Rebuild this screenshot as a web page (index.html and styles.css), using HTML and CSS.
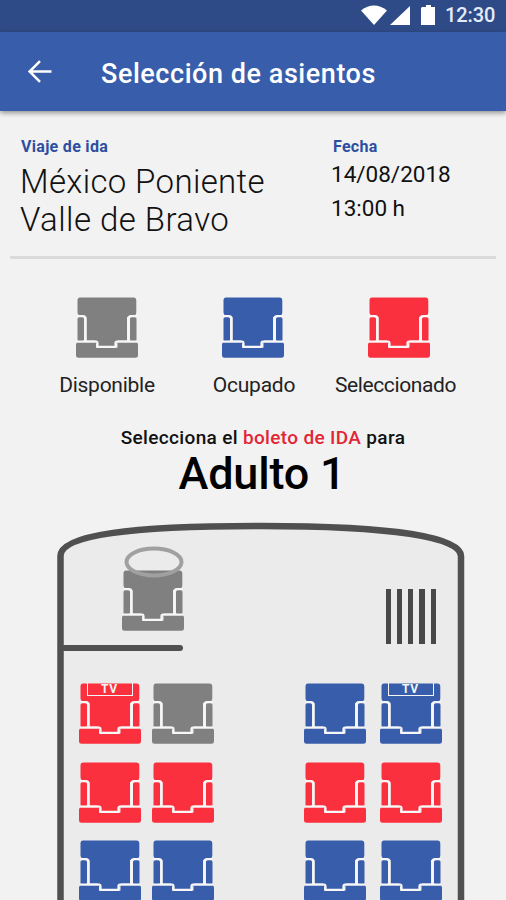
FILE: index.html
```html
<!DOCTYPE html>
<html lang="es">
<head>
<meta charset="utf-8">
<title>Selección de asientos</title>
<link rel="stylesheet" href="styles.css">
</head>
<body>
<svg class="defs" aria-hidden="true">
  <symbol id="seat" viewBox="0 0 62 61">
    <path fill="currentColor" d="M4 .5H57.500Q60.300.500 60.300 3.500V15Q60.300 18.500 57.500 18.500L51 20V43.500H42L39 49H22L19 43.500H10.500V20L4 18.500Q1.500 18 1.500 15V3.500Q1.500.500 4 .500Z"/>
    <rect fill="currentColor" x="1.500" y="20" width="6.500" height="24.500" rx="2"/>
    <rect fill="currentColor" x="54" y="20" width="6.500" height="24.500" rx="2"/>
    <path fill="currentColor" d="M2 45.500H20V50.500H41.500V45.500H60Q62 45.500 62 47.500V58.500Q62 60.800 59.500 60.800H2.500Q0 60.800 0 58.500V47.500Q0 45.500 2 45.500Z"/>
    <path class="seam" d="M1.500 19.200H7Q9.500 19.200 9.500 22V44.500M60.500 19.200H55Q52.500 19.200 52.500 22V44.500M1.500 44.500H20.500Q21.500 44.500 21.500 46V49.800H39.500V46Q39.500 44.500 41 44.500H60.500"/>
  </symbol>
</svg>

<div class="status">
  <svg class="status-icons" viewBox="0 0 76 24">
    <path d="M0 6.500Q13-3.500 26 6.500L13 21Z"/>
    <path d="M49 2V21H29Z"/>
    <path d="M61 3H65V1H70V3H74V21H60V4Z"/>
  </svg>
  <span class="clock">12:30</span>
</div>
<header class="bar">
  <svg class="back" viewBox="0 0 24 24"><path d="M12.500 2L2.500 12L12.500 22M3 12H23.500"/></svg>
  <h1>Selección de asientos</h1>
</header>

<section class="trip">
  <div class="route">
    <div class="label">Viaje de ida</div>
    <div class="place">México Poniente</div>
    <div class="place second">Valle de Bravo</div>
  </div>
  <div class="date">
    <div class="label">Fecha</div>
    <div class="when">14/08/2018</div>
    <div class="when hour">13:00 h</div>
  </div>
</section>

<section class="legend">
  <div class="key free"><svg class="seat"><use href="#seat"/></svg><span>Disponible</span></div>
  <div class="key taken"><svg class="seat"><use href="#seat"/></svg><span class="busy">Ocupado</span></div>
  <div class="key chosen"><svg class="seat"><use href="#seat"/></svg><span class="picked">Seleccionado</span></div>
</section>

<section class="prompt">
  <p>Selecciona el <em>boleto de IDA</em> para</p>
  <h2>Adulto 1</h2>
</section>

<main class="bus">
  <svg class="shell" viewBox="0 0 410 380"><path d="M4.500 385V35C4.500 14 74 5 204.500 5C335 5 405 16 405 35V385"/></svg>
  <div class="cabin">
    <div class="driver free">
      <svg class="seat"><use href="#seat"/></svg>
      <svg class="wheel" viewBox="0 0 60 32"><ellipse cx="30" cy="16" rx="27.500" ry="13.500"/></svg>
    </div>
    <div class="steps"><i></i><i></i><i></i><i></i><i></i></div>
  </div>
  <div class="wall"></div>
  <div class="seats">
    <div class="cell chosen"><svg class="seat"><use href="#seat"/></svg><span class="tv">TV</span></div>
    <div class="cell free"><svg class="seat"><use href="#seat"/></svg></div>
    <div class="cell taken"><svg class="seat"><use href="#seat"/></svg></div>
    <div class="cell taken"><svg class="seat"><use href="#seat"/></svg><span class="tv">TV</span></div>
    <div class="cell chosen"><svg class="seat"><use href="#seat"/></svg></div>
    <div class="cell chosen"><svg class="seat"><use href="#seat"/></svg></div>
    <div class="cell chosen"><svg class="seat"><use href="#seat"/></svg></div>
    <div class="cell chosen"><svg class="seat"><use href="#seat"/></svg></div>
    <div class="cell taken"><svg class="seat"><use href="#seat"/></svg></div>
    <div class="cell taken"><svg class="seat"><use href="#seat"/></svg></div>
    <div class="cell taken"><svg class="seat"><use href="#seat"/></svg></div>
    <div class="cell taken"><svg class="seat"><use href="#seat"/></svg></div>
  </div>
</main>
</body>
</html>
```

FILE: styles.css
```css
* { box-sizing: border-box; margin: 0; padding: 0; }
body {
  width: 506px;
  height: 900px;
  overflow: hidden;
  background: #f2f2f2;
  font-family: Roboto, sans-serif;
  color: #111;
  white-space: nowrap;
}
svg { display: block; }
.defs { position: absolute; width: 0; height: 0; }

.status {
  height: 32px;
  background: #2f4b87;
  display: flex;
  justify-content: flex-end;
  padding: 4px 11px 0 0;
  color: #e4ebfb;
}
.status-icons { width: 76px; height: 24px; fill: #fff; margin-right: 8px; }
.clock { font-size: 20px; line-height: 23px; font-weight: 500; letter-spacing: -.1px; width: 50px; }

.bar {
  height: 79px;
  background: #385dab;
  box-shadow: 0 2px 5px rgba(0, 0, 0, .4);
  display: flex;
  align-items: center;
  padding: 4px 0 0 27px;
  color: #fff;
}
.back { width: 25px; height: 25px; fill: none; stroke: #fff; stroke-width: 2.4; margin-right: 49px; margin-top: -4px; }
.bar h1 { font-size: 27px; font-weight: 500; letter-spacing: .55px; }

.trip {
  height: 148px;
  margin: 0 10px;
  padding: 26px 0 0 11px;
  border-bottom: 3px solid #dadada;
  display: flex;
}
.route { width: 312px; }
.label { font-size: 16px; line-height: 19px; font-weight: 700; letter-spacing: .3px; color: #2d4fa0; }
.date .label { letter-spacing: .3px; }
.place { font-size: 33px; line-height: 38px; font-weight: 300; letter-spacing: .35px; margin: 7px 0 0 -1px; }
.place.second { margin-top: 0; letter-spacing: .45px; }
.when { font-size: 22.5px; line-height: 34px; margin: 1px 0 0 -2px; }
.when.hour { margin-top: 0; letter-spacing: 0; }

.seat { width: 62px; height: 61px; flex: none; }
.seam { fill: none; stroke: #f7f7f7; stroke-width: 2.2; }
.free { color: #808080; }
.taken { color: #385dab; }
.chosen { color: #fb303e; }

.legend {
  height: 164px;
  padding: 38px 0 0 34px;
  display: grid;
  grid-template-columns: 146px 146px 146px;
  align-content: start;
}
.key { display: flex; flex-direction: column; align-items: center; height: 110px; }
.key span { color: #222; font-size: 21px; line-height: 26px; letter-spacing: -.25px; margin-top: 14px; }
.key .busy { margin-left: 2px; }
.key .picked { letter-spacing: -.4px; margin-left: -7px; }

.prompt { height: 99px; text-align: center; padding-top: 3px; }
.prompt p { font-size: 19px; line-height: 24px; font-weight: 500; letter-spacing: .34px; margin-left: 20px; }
.prompt em { font-style: normal; color: #e22636; }
.prompt h2 { font-size: 45px; line-height: 48px; font-weight: 500; letter-spacing: -.2px; color: #000; margin-left: 18px; }

.bus { position: relative; width: 410px; height: 380px; margin: -1px 0 0 56px; }
.shell { position: absolute; inset: 0; width: 410px; height: 380px; fill: #ebebeb; stroke: #505050; stroke-width: 6.500px; }
.cabin { position: relative; display: flex; height: 124px; padding: 49px 30px 0 66px; justify-content: space-between; }
.driver { position: relative; height: 61px; }
.wheel { position: absolute; left: 2px; top: -24px; width: 60px; height: 32px; fill: none; stroke: #a0a0a0; stroke-width: 4; }
.steps { display: flex; gap: 6px; height: 55px; margin-top: 19px; }
.steps i { width: 5.300px; background: #484848; }
.wall { position: relative; width: 121px; height: 6px; margin-left: 6px; border-radius: 0 3px 3px 0; background: #505050; }
.seats {
  position: relative;
  padding: 32px 0 0 22.500px;
  display: grid;
  grid-template-columns: 73px 152px 76px 62px;
  grid-auto-rows: 78.700px;
}
.cell { position: relative; width: 62px; }
.tv {
  position: absolute;
  left: 8px;
  top: 0;
  width: 46px;
  height: 13px;
  border: 1.500px solid #f5f5f5;
  border-top: 0;
  color: #f5f5f5;
  font-size: 12px;
  line-height: 12px;
  font-weight: 700;
  letter-spacing: .8px;
  text-align: center;
}
```
